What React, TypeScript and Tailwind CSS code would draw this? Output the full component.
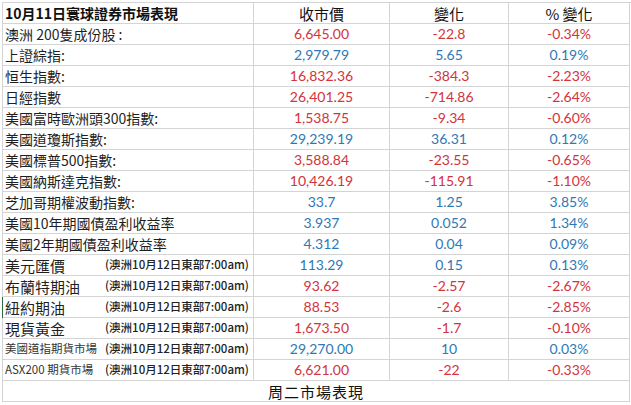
type Kind = 'normal' | 'big' | 'small'

interface Row {
  label: string
  kind: Kind
  close: string
  change: string
  pct: string
  up: boolean
  marked?: boolean
}

const NOTE = '(澳洲10月12日東部7:00am)'

const rows: Row[] = [
  { label: '澳洲 200隻成份股 :', kind: 'normal', close: '6,645.00', change: '-22.8', pct: '-0.34%', up: false },
  { label: '上證綜指:', kind: 'normal', close: '2,979.79', change: '5.65', pct: '0.19%', up: true },
  { label: '恒生指數:', kind: 'normal', close: '16,832.36', change: '-384.3', pct: '-2.23%', up: false },
  { label: '日經指數', kind: 'normal', close: '26,401.25', change: '-714.86', pct: '-2.64%', up: false },
  { label: '美國富時歐洲頭300指數:', kind: 'normal', close: '1,538.75', change: '-9.34', pct: '-0.60%', up: false },
  { label: '美國道瓊斯指數:', kind: 'normal', close: '29,239.19', change: '36.31', pct: '0.12%', up: true },
  { label: '美國標普500指數:', kind: 'normal', close: '3,588.84', change: '-23.55', pct: '-0.65%', up: false },
  { label: '美國納斯達克指數:', kind: 'normal', close: '10,426.19', change: '-115.91', pct: '-1.10%', up: false },
  { label: '芝加哥期權波動指數:', kind: 'normal', close: '33.7', change: '1.25', pct: '3.85%', up: true },
  { label: '美國10年期國債盈利收益率', kind: 'normal', close: '3.937', change: '0.052', pct: '1.34%', up: true },
  { label: '美國2年期國債盈利收益率', kind: 'normal', close: '4.312', change: '0.04', pct: '0.09%', up: true },
  { label: '美元匯價', kind: 'big', close: '113.29', change: '0.15', pct: '0.13%', up: true },
  { label: '布蘭特期油', kind: 'big', close: '93.62', change: '-2.57', pct: '-2.67%', up: false },
  { label: '紐約期油', kind: 'big', close: '88.53', change: '-2.6', pct: '-2.85%', up: false, marked: true },
  { label: '現貨黃金', kind: 'big', close: '1,673.50', change: '-1.7', pct: '-0.10%', up: false },
  { label: '美國道指期貨市場', kind: 'small', close: '29,270.00', change: '10', pct: '0.03%', up: true },
  { label: 'ASX200 期貨市場', kind: 'small', close: '6,621.00', change: '-22', pct: '-0.33%', up: false },
]

const cell = 'border-r border-b border-[#d4d4d4] flex items-center overflow-hidden whitespace-nowrap'
const num = `${cell} justify-center font-['Lato',sans-serif] text-[14px] leading-none`

function Label({ row }: { row: Row }) {
  if (row.kind === 'normal') {
    return <span className="text-[14px] leading-none text-[#1f1f1f]">{row.label}</span>
  }
  return (
    <>
      <span
        className={`w-[100px] shrink-0 leading-none ${
          row.kind === 'big' ? 'text-[15px] text-[#1f1f1f]' : 'text-[11.5px] text-[#333]'
        }`}
      >
        {row.label}
      </span>
      <span className="text-[11.5px] font-medium leading-none text-[#222]">{NOTE}</span>
    </>
  )
}

export default function App() {
  return (
    <div className="w-[631px] h-[405px] bg-white pt-[2px] pl-[2px] font-['Noto_Sans_CJK_TC','Noto_Sans',sans-serif]">
      <div className="grid grid-cols-[251px_136px_119px_121px] auto-rows-[21px] border-l border-t border-[#d4d4d4]">
        <div className={`${cell} pl-[2px] text-[14px] font-bold leading-none text-[#111]`}>
          10月11日寰球證券市場表現
        </div>
        <div className={`${cell} justify-center text-[15px] leading-none text-[#111]`}>收市價</div>
        <div className={`${cell} justify-center text-[15px] leading-none text-[#111]`}>變化</div>
        <div className={`${cell} justify-center text-[15px] leading-none text-[#111]`}>% 變化</div>

        {rows.map((r) => {
          const color = r.up ? 'text-[#2f78b4]' : 'text-[#d2343b]'
          return (
            <div key={r.label} className="contents">
              <div className={`${cell} pl-[2px] ${r.marked ? 'shadow-[-1px_0_0_#2f6b3f]' : ''}`}>
                <Label row={r} />
              </div>
              <div className={`${num} ${color}`}>{r.close}</div>
              <div className={`${num} ${color}`}>{r.change}</div>
              <div className={`${num} ${color}`}>{r.pct}</div>
            </div>
          )
        })}

        <div className={`${cell} col-span-4 justify-center text-[15px] leading-none tracking-[1px] text-[#111]`}>
          周二市場表現
        </div>
      </div>
    </div>
  )
}
